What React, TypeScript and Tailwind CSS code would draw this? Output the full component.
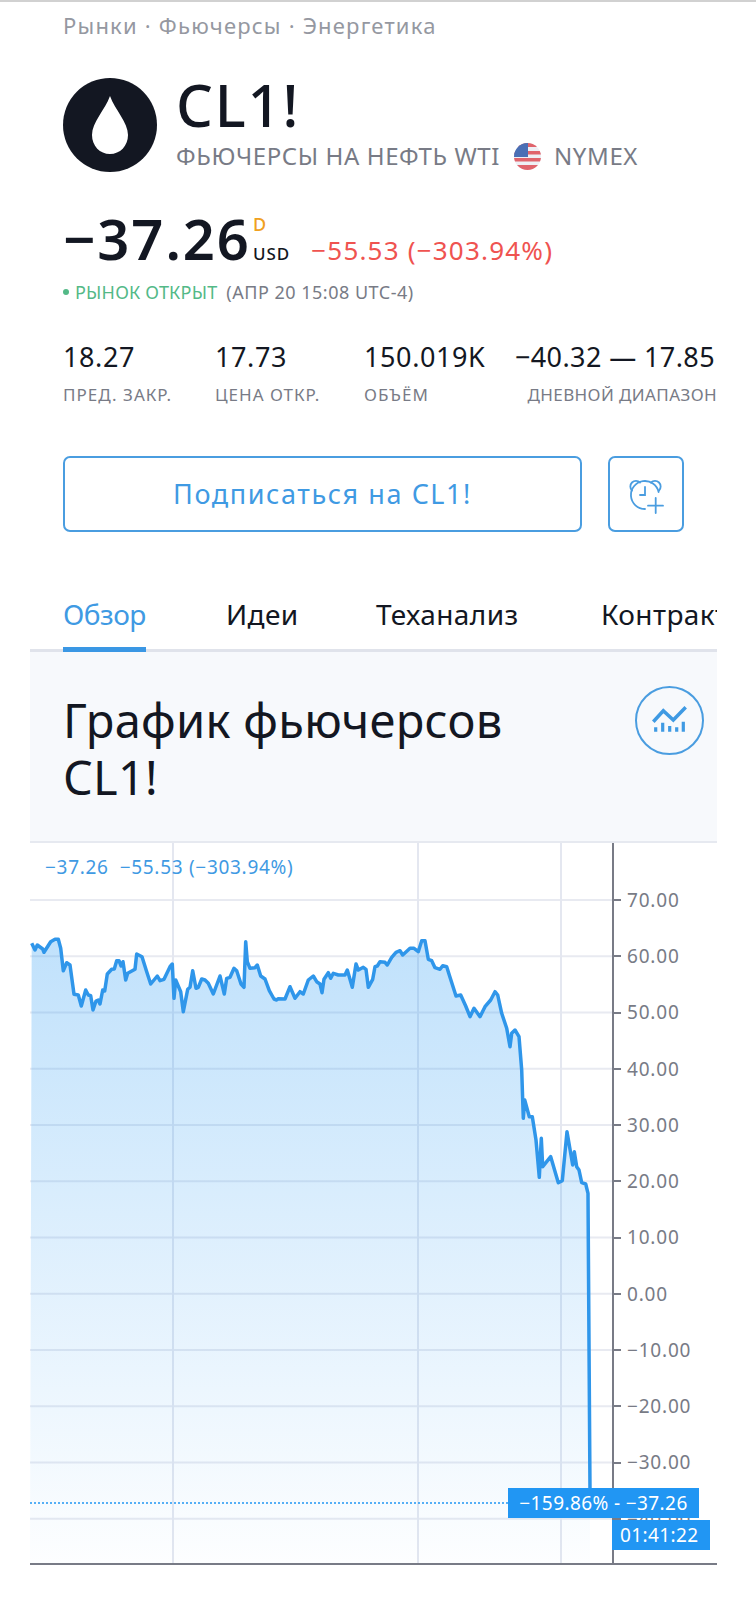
const ZOOM_A = [[35,130],[45,150],[52,135],[68,147],[72,157],[92,125],[105,118],[115,118],[122,145],[130,212],[140,188],[150,195],[162,283],[175,285],[184,318],[197,270],[205,285],[212,287],[219,330],[228,303],[235,300],[240,312],[248,270],[254,273],[262,222],[275,208],[283,207],[290,182],[297,182],[303,198],[309,185],[317,240],[323,220],[345,208],[350,162],[366,170],[380,215],[392,252],[412,228],[420,242],[432,238],[450,200],[457,192],[462,295],[467,240],[482,275],[490,335],[503,268],[510,262],[518,212],[528,265],[535,262],[545,237],[555,240],[565,250],[580,282],[600,228],[613,282],[620,235],[630,232],[642,205],[650,212],[663,252],[672,262],[677,125],[682,185],[690,205],[705,203],[712,195],[722,228],[735,237],[748,272],[762,297],[770,300],[775,296],[795,297],[810,260],[825,295],[840,275],[850,282],[865,240],[880,228],[890,245],[900,252],[906,278],[912,238],[925,218],[932,235],[940,220],[955,225],[975,225],[982,210],[997,262],[1008,192],[1015,210],[1030,202],[1038,208],[1045,262],[1058,238],[1065,200],[1072,198],[1080,185],[1095,187],[1102,195],[1115,172],[1128,157],[1140,152]];
const ZOOM_B = [[8,165],[30,145],[42,145],[55,155],[65,122],[75,122],[85,178],[95,182],[105,203],[120,208],[128,197],[140,200],[150,232],[168,288],[182,285],[197,318],[210,350],[222,325],[240,350],[255,320],[272,300],[285,275],[293,285],[305,340],[320,385],[330,440],[335,400],[345,390],[357,410],[365,510],[370,655],[374,600],[388,650],[397,650],[408,720],[418,832],[424,715],[428,800],[452,770],[475,848],[487,842],[501,695],[518,795],[523,755],[530,800],[537,810],[545,848],[557,852],[564,880],[565,1020]];

// chart top is y=843, plot left is x=30
const toPlot = (x: number, y: number) => `${(x - 30).toFixed(1)},${(y - 843).toFixed(1)}`;
const linePts = [
    ...ZOOM_A.map(([x, y]) => toPlot(20 + x / 3, 900 + y / 3)),
    ...ZOOM_B.map(([x, y]) => toPlot(400 + x / 3, 900 + y / 3)),
    toPlot(590, 1490),
];
const areaPts = [...linePts, toPlot(590, 1563), toPlot(30, 1563)];

const AXIS = ["70.00", "60.00", "50.00", "40.00", "30.00", "20.00", "10.00", "0.00", "−10.00", "−20.00", "−30.00", "−40.00"];
const gridYs = AXIS.map((_, i) => 57 + i * 56.25);

const STATS = [
    { value: "18.27", label: "ПРЕД. ЗАКР.", cls: "w-[152px] shrink-0" },
    { value: "17.73", label: "ЦЕНА ОТКР.", cls: "w-[149px] shrink-0" },
    { value: "150.019K", label: "ОБЪЁМ", cls: "w-[140px] shrink-0" },
];

export default function App() {
    return (
        <div className="w-[756px] h-[1600px] overflow-hidden bg-white font-['Noto_Sans',sans-serif]">
            <div className="h-[2px] bg-[#d1d1d1]" />
            <div className="ml-[30px] w-[687px] overflow-hidden">
                <div className="pl-[33px]">
                    <p className="mt-[8px] h-[30px] text-[22px] leading-[30px] tracking-[1.2px] text-[#9598a1] whitespace-nowrap">Рынки · Фьючерсы · Энергетика</p>

                    <div className="mt-[38px] flex">
                        <div className="w-[94px] h-[94px] rounded-full bg-[#131722] flex items-center justify-center shrink-0">
                            <svg width="38" height="58" viewBox="0 0 38 58">
                                <path d="M19 0 C24 14 37 26 37 39 C37 50 29 58 19 58 C9 58 1 50 1 39 C1 26 14 14 19 0Z" fill="#fff" />
                            </svg>
                        </div>
                        <div className="ml-[19px]">
                            <p className="h-[58px] text-[58px] leading-[58px] font-medium tracking-[1.8px] text-[#131722] -mt-[2px]">CL1!</p>
                            <div className="mt-[7px] flex items-center h-[30px] text-[24px] tracking-[0.6px] text-[#787b86] whitespace-nowrap">
                                <span>ФЬЮЧЕРСЫ НА НЕФТЬ WTI</span>
                                <svg className="ml-[14px] mr-[13px]" width="27" height="27" viewBox="0 0 27 27">
                                    <clipPath id="flag"><circle cx="13.5" cy="13.5" r="13.5" /></clipPath>
                                    <g clipPath="url(#flag)">
                                        <rect width="27" height="27" fill="#eef0f5" />
                                        <rect y="0" width="27" height="4" fill="#e0646c" />
                                        <rect y="8" width="27" height="3.5" fill="#e0646c" />
                                        <rect y="15" width="27" height="3.5" fill="#e0646c" />
                                        <rect y="22" width="27" height="5" fill="#e0646c" />
                                        <rect width="14" height="14" fill="#4a6fb5" />
                                    </g>
                                </svg>
                                <span>NYMEX</span>
                            </div>
                        </div>
                    </div>

                    <div className="mt-[37px] flex h-[58px] items-baseline whitespace-nowrap">
                        <span className="text-[56px] leading-[58px] font-semibold tracking-[2px] text-[#131722]">−37.26</span>
                        <div className="relative ml-[2px] text-[17px] font-medium tracking-[1px] text-[#131722]">
                            USD
                            <span className="absolute left-0 -top-[30px] text-[18px] text-[#f0a020]">D</span>
                        </div>
                        <span className="ml-[21px] text-[26px] tracking-[1.2px] text-[#ef5350]">−55.53 (−303.94%)</span>
                    </div>

                    <div className="mt-[13px] flex items-center h-[24px] text-[18px] tracking-[0.2px] whitespace-nowrap">
                        <span className="w-[6px] h-[6px] rounded-full bg-[#53b987] mr-[6px]" />
                        <span className="text-[#53b987]">РЫНОК ОТКРЫТ</span>
                        <span className="ml-[9px] tracking-[0.5px] text-[#787b86]">(АПР 20 15:08 UTC-4)</span>
                    </div>

                    <div className="mt-[35px] flex">
                        {STATS.map((s) => (
                            <div key={s.label} className={s.cls}>
                                <p className="text-[27px] leading-[36px] tracking-[0.6px] text-[#131722] whitespace-nowrap">{s.value}</p>
                                <p className="mt-[8px] text-[17px] leading-[24px] tracking-[1px] text-[#787b86] whitespace-nowrap">{s.label}</p>
                            </div>
                        ))}
                        <div className="flex-1 text-right whitespace-nowrap">
                            <p className="text-[27px] leading-[36px] tracking-[0.4px] text-[#131722] pr-[2px]">−40.32 — 17.85</p>
                            <p className="mt-[8px] text-[17px] leading-[24px] tracking-[0.4px] text-[#787b86]">ДНЕВНОЙ ДИАПАЗОН</p>
                        </div>
                    </div>

                    <div className="mt-[49px] flex gap-[26px]">
                        <button className="w-[519px] h-[76px] rounded-[7px] border-2 border-[#4a9de0] text-[27px] tracking-[1.6px] text-[#3f9ae3]">Подписаться на CL1!</button>
                        <button className="w-[76px] h-[76px] rounded-[7px] border-2 border-[#4a9de0] flex items-center justify-center">
                            <svg width="40" height="40" viewBox="1 -1 40 40" fill="none" stroke="#4a9de0" strokeWidth="1.8" strokeLinecap="round">
                                <path d="M20 34A14 14 0 1 1 33.6 17" />
                                <path d="M7 15.5A5.5 5.5 0 0 1 15 7.5" />
                                <path d="M26 7.5A5.5 5.5 0 0 1 34 15.5" />
                                <path d="M20 12V20H15" />
                                <path d="M30.7 23V38M23 30.7H38" />
                            </svg>
                        </button>
                    </div>
                </div>

                <div className="mt-[64px] flex h-[56px] border-b-[3px] border-[#e0e3eb] pl-[33px] whitespace-nowrap text-[28px] leading-[36px] tracking-[0.4px] text-[#131722]">
                    <div className="w-[163px] shrink-0"><span className="inline-block h-[56px] border-b-[5px] border-[#3a97e4] tracking-[-0.5px] text-[#3f9ae3]">Обзор</span></div>
                    <span className="w-[150px] shrink-0">Идеи</span>
                    <span className="w-[225px] shrink-0">Теханализ</span>
                    <span className="shrink-0">Контракты</span>
                </div>

                <div className="h-[191px] bg-[#f7f9fc] border-b-2 border-[#e6e9f0] pl-[33px] pr-[13px] flex justify-between">
                    <h2 className="mt-[40px] w-[480px] text-[47px] leading-[57px] font-normal tracking-[0.3px] text-[#131722]">График фьючерсов CL1!</h2>
                    <button className="mt-[34px] w-[69px] h-[69px] rounded-full border-2 border-[#4a9de0] shrink-0 relative">
                        <svg className="absolute -left-[2px] -top-[2px]" width="69" height="69" viewBox="0 0 69 69" fill="none" stroke="#3f9ae3">
                            <path d="M18.3 35.7L28.3 24.7L38.3 34L50.7 21.3" strokeWidth="3.5" />
                            <path d="M20.7 45.7V41.3M27.7 45.7V36.7M34.7 45.7V40M41.7 45.7V41.3M48.3 45.7V35.7" strokeWidth="3.2" />
                        </svg>
                    </button>
                </div>

                <div className="relative h-[722px] border-b-2 border-[#787b86] flex">
                    <svg className="w-[582px] h-[720px] shrink-0" viewBox="0 0 582 720">
                        <defs>
                            <linearGradient id="area" x1="0" y1="100" x2="0" y2="720" gradientUnits="userSpaceOnUse">
                                <stop offset="0" stopColor="#2196f3" stopOpacity="0.28" />
                                <stop offset="1" stopColor="#2196f3" stopOpacity="0.01" />
                            </linearGradient>
                        </defs>
                        {gridYs.map((y) => <line key={y} x1="0" x2="582" y1={y} y2={y} stroke="#e8eaf1" strokeWidth="2" />)}
                        {[143, 388, 531].map((x) => <line key={x} y1="0" y2="720" x1={x} x2={x} stroke="#e4e7f0" strokeWidth="2" />)}
                        <polygon points={areaPts.join(" ")} fill="url(#area)" />
                        <polyline points={linePts.join(" ")} fill="none" stroke="#2f96ea" strokeWidth="3.5" strokeLinejoin="round" />
                        <line x1="0" x2="480" y1="660" y2="660" stroke="#2196f3" strokeWidth="1.5" strokeDasharray="2 2" />
                    </svg>
                    <div className="border-l-2 border-[#787b86] flex-1 pt-[29px]">
                        {AXIS.map((a) => (
                            <div key={a} className="h-[56.25px] flex items-center text-[19px] tracking-[0.8px] text-[#787b86]">
                                <span className="w-[7px] h-[2px] bg-[#787b86] mr-[6px]" />
                                <span>{a}</span>
                            </div>
                        ))}
                    </div>
                    <div className="absolute left-[15px] top-[11px] flex gap-[11px] text-[19px] leading-[26px] tracking-[0.7px] text-[#3f9ae3] whitespace-nowrap">
                        <span>−37.26</span>
                        <span>−55.53 (−303.94%)</span>
                    </div>
                    <span className="absolute left-[478px] top-[645px] w-[191px] h-[30px] bg-[#2196f3] text-white text-[19px] leading-[30px] tracking-[0.4px] text-center whitespace-nowrap">−159.86% - −37.26</span>
                    <span className="absolute left-[582px] top-[677px] w-[98px] h-[30px] bg-[#2196f3] text-white text-[19px] leading-[30px] tracking-[0.4px] pl-[8px]">01:41:22</span>
                </div>
            </div>
        </div>
    );
}
